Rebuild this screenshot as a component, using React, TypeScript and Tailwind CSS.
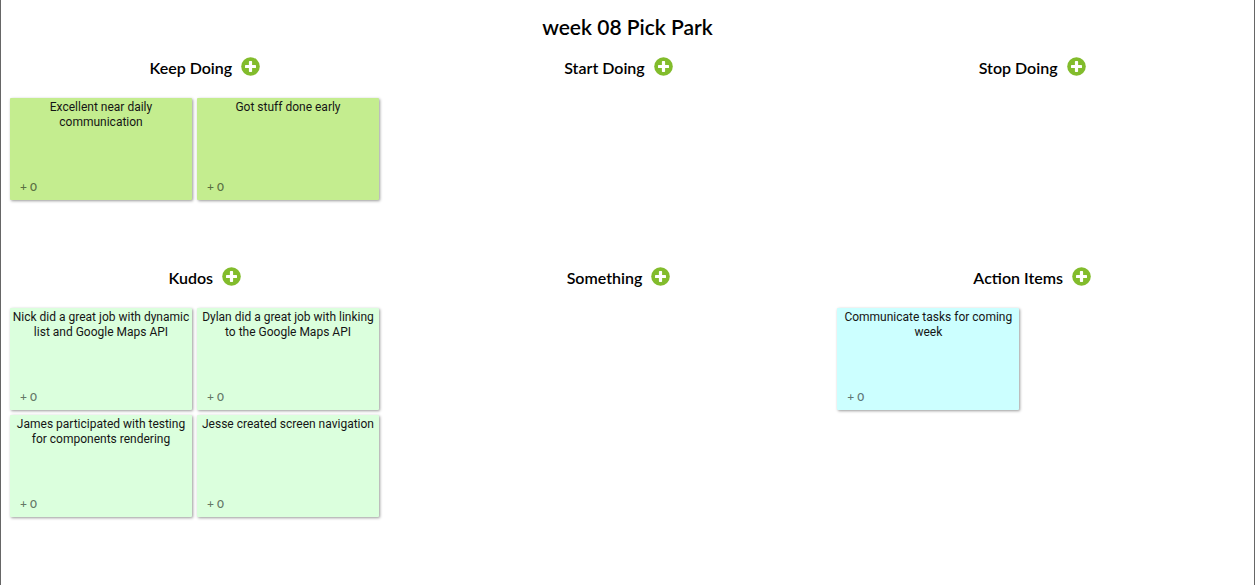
type Tone = "lime" | "mint" | "cyan";

interface ColumnData {
  title: string;
  tone: Tone;
  notes: string[];
}

const tones: Record<Tone, string> = {
  lime: "bg-[#c4ed8f]",
  mint: "bg-[#dbffdd]",
  cyan: "bg-[#ccffff]",
};

const columns: ColumnData[] = [
  {
    title: "Keep Doing",
    tone: "lime",
    notes: ["Excellent near daily communication", "Got stuff done early"],
  },
  { title: "Start Doing", tone: "lime", notes: [] },
  { title: "Stop Doing", tone: "lime", notes: [] },
  {
    title: "Kudos",
    tone: "mint",
    notes: [
      "Nick did a great job with dynamic list and Google Maps API",
      "Dylan did a great job with linking to the Google Maps API",
      "James participated with testing for components rendering",
      "Jesse created screen navigation",
    ],
  },
  { title: "Something", tone: "mint", notes: [] },
  {
    title: "Action Items",
    tone: "cyan",
    notes: ["Communicate tasks for coming week"],
  },
];

function AddButton({ label }: { label: string }) {
  return (
    <button type="button" aria-label={label} className="mb-[3px] cursor-pointer">
      <svg viewBox="0 0 19 19" className="size-[19px]" aria-hidden="true">
        <circle cx="9.5" cy="9.5" r="9.3" fill="#82bc2c" />
        <path
          d="M8.6 4h1.8q.7 0 .7.7v3.2h3.2q.7 0 .7.7v1.8q0 .7-.7.7h-3.2v3.2q0 .7-.7.7H8.6q-.7 0-.7-.7v-3.200H4.7q-.7 0-.7-.7V8.600q0-.7.7-.7h3.200V4.700q0-.7.7-.7z"
          fill="#fff"
        />
      </svg>
    </button>
  );
}

function Note({ text, tone }: { text: string; tone: Tone }) {
  return (
    <li
      className={`flex h-[102px] w-[182px] flex-col justify-between rounded-[1px] pt-0.5 pb-1.5 shadow-[1px_1px_3px_rgba(0,0,0,0.4)] ${tones[tone]}`}
    >
      <p className="text-center font-['Roboto','Lato',sans-serif] text-[12px] leading-[15px] text-[#151515]">
        {text}
      </p>
      <button
        type="button"
        className="cursor-pointer self-start pl-2.5 text-[12px] leading-[15px] font-semibold text-black/55"
      >
        + 0
      </button>
    </li>
  );
}

function Column({ title, tone, notes }: ColumnData) {
  return (
    <section className="min-h-[210px]">
      <div className="flex h-11 items-center justify-center gap-[9px] pr-1.5">
        <h2 className="text-[16px] leading-6 font-semibold">{title}</h2>
        <AddButton label={`Add to ${title}`} />
      </div>
      <ul className="flex flex-wrap gap-[5px] pt-2 pl-[9px]">
        {notes.map((note) => (
          <Note key={note} text={note} tone={tone} />
        ))}
      </ul>
    </section>
  );
}

export default function App() {
  return (
    <main className="min-h-screen border-x border-[#666] bg-white font-['Lato','Open_Sans',sans-serif] text-black">
      <h1 className="pt-3 pb-1 text-center text-[21px] leading-[30px] font-semibold">
        week 08 Pick Park
      </h1>
      <div className="grid grid-cols-3 pr-3">
        {columns.map((column) => (
          <Column key={column.title} {...column} />
        ))}
      </div>
    </main>
  );
}
